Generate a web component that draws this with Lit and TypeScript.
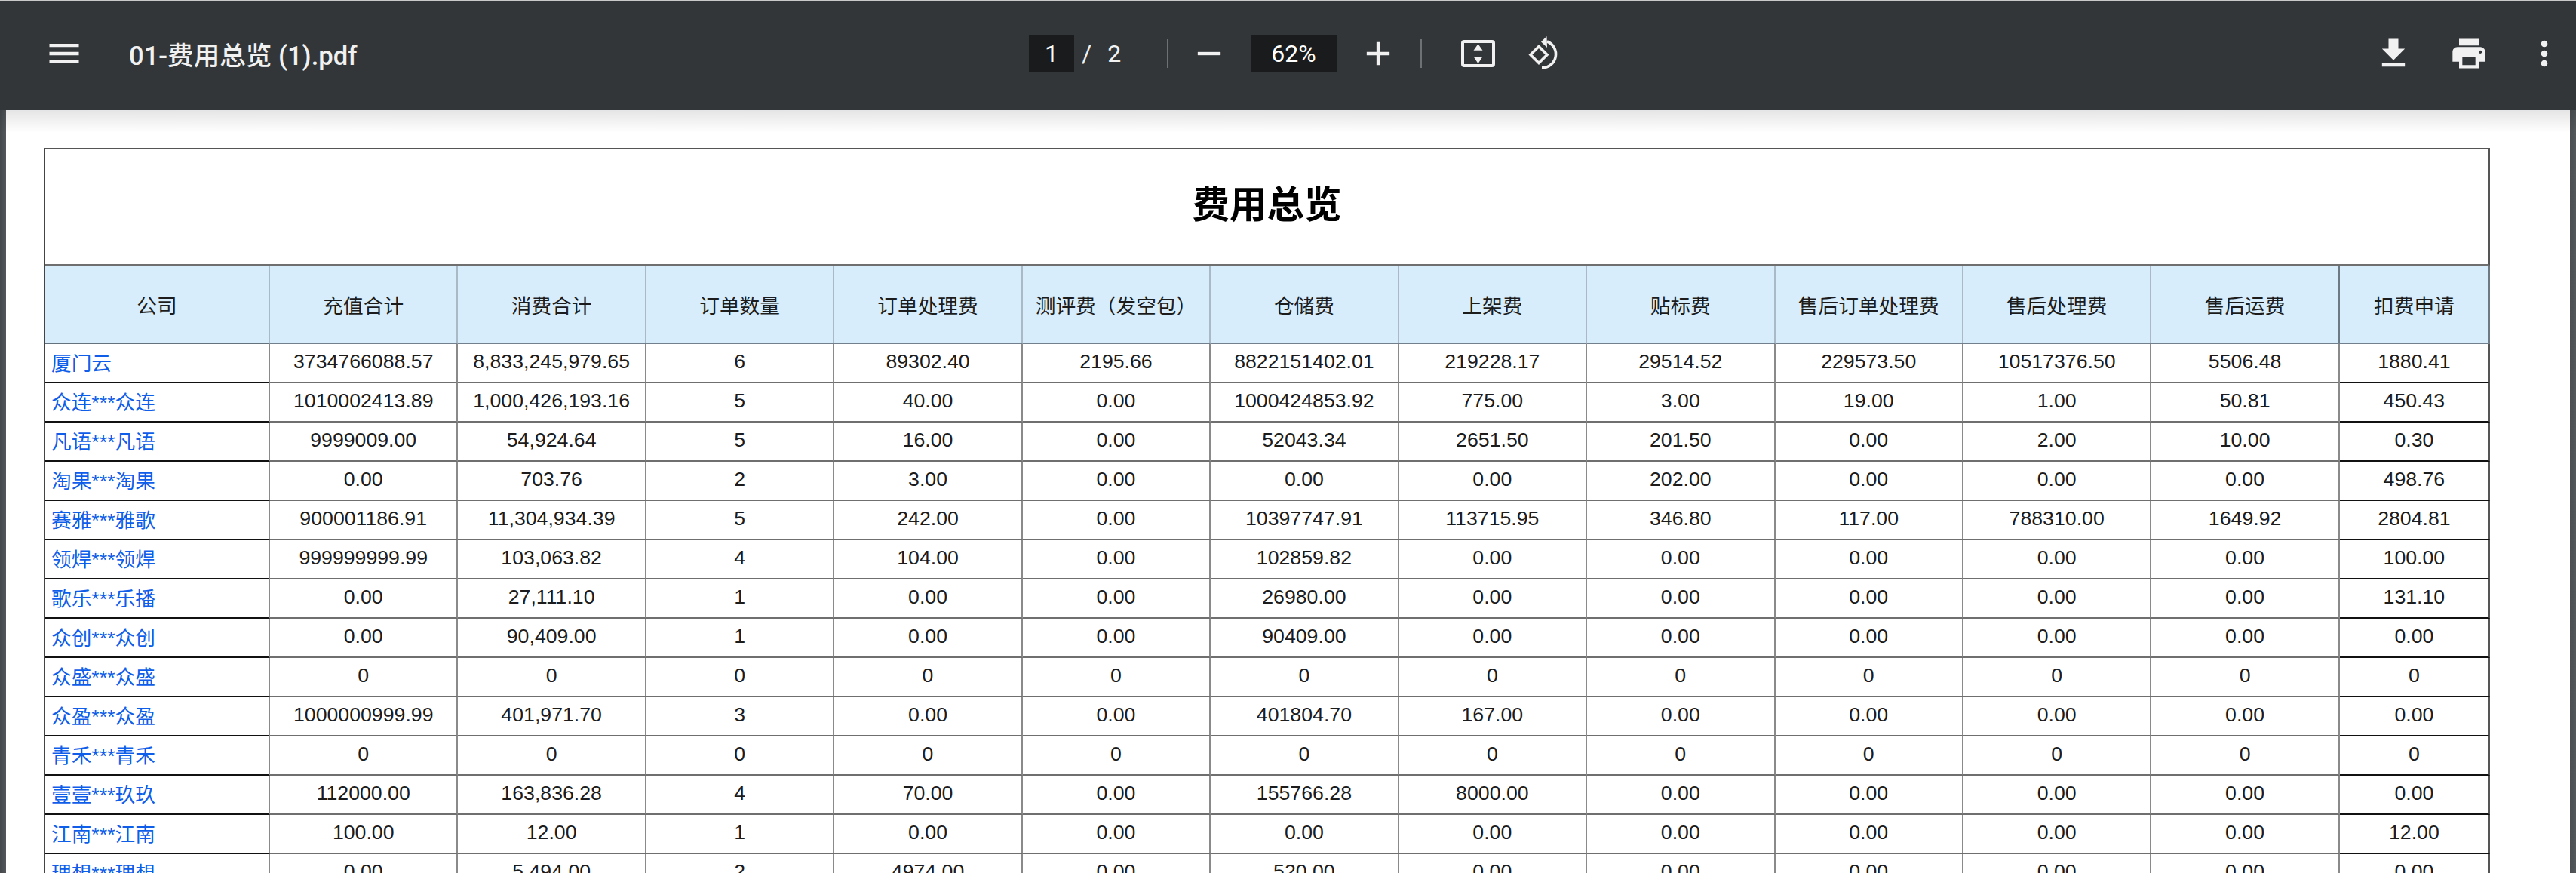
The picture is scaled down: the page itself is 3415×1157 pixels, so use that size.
import { LitElement, html, css } from "lit";
import { customElement } from "lit/decorators.js";

const HEAD = ["公司","充值合计","消费合计","订单数量","订单处理费","测评费（发空包）","仓储费","上架费","贴标费","售后订单处理费","售后处理费","售后运费","扣费申请"];
const ROWS: string[][] = [
  ["厦门云","3734766088.57","8,833,245,979.65","6","89302.40","2195.66","8822151402.01","219228.17","29514.52","229573.50","10517376.50","5506.48","1880.41"],
  ["众连***众连","1010002413.89","1,000,426,193.16","5","40.00","0.00","1000424853.92","775.00","3.00","19.00","1.00","50.81","450.43"],
  ["凡语***凡语","9999009.00","54,924.64","5","16.00","0.00","52043.34","2651.50","201.50","0.00","2.00","10.00","0.30"],
  ["淘果***淘果","0.00","703.76","2","3.00","0.00","0.00","0.00","202.00","0.00","0.00","0.00","498.76"],
  ["赛雅***雅歌","900001186.91","11,304,934.39","5","242.00","0.00","10397747.91","113715.95","346.80","117.00","788310.00","1649.92","2804.81"],
  ["领焊***领焊","999999999.99","103,063.82","4","104.00","0.00","102859.82","0.00","0.00","0.00","0.00","0.00","100.00"],
  ["歌乐***乐播","0.00","27,111.10","1","0.00","0.00","26980.00","0.00","0.00","0.00","0.00","0.00","131.10"],
  ["众创***众创","0.00","90,409.00","1","0.00","0.00","90409.00","0.00","0.00","0.00","0.00","0.00","0.00"],
  ["众盛***众盛","0","0","0","0","0","0","0","0","0","0","0","0"],
  ["众盈***众盈","1000000999.99","401,971.70","3","0.00","0.00","401804.70","167.00","0.00","0.00","0.00","0.00","0.00"],
  ["青禾***青禾","0","0","0","0","0","0","0","0","0","0","0","0"],
  ["壹壹***玖玖","112000.00","163,836.28","4","70.00","0.00","155766.28","8000.00","0.00","0.00","0.00","0.00","0.00"],
  ["江南***江南","100.00","12.00","1","0.00","0.00","0.00","0.00","0.00","0.00","0.00","0.00","12.00"],
  ["理想***理想","0.00","5,494.00","2","4974.00","0.00","520.00","0.00","0.00","0.00","0.00","0.00","0.00"],
];

const icon = (d: string) => html`<svg class="icon" viewBox="0 0 24 24" fill="currentColor"><path d=${d}></path></svg>`;

@customElement("app-root")
export class AppRoot extends LitElement {
  static styles = css`
    :host { display: block; width: 100%; height: 100vh; overflow: hidden; background: #4d5154; font-family: Roboto, "Noto Sans CJK SC", sans-serif; }
    .topline { height: 1px; background: #c9c9c9; }
    .toolbar { position: relative; z-index: 2; box-sizing: border-box; height: 145px; padding-bottom: 5px; background: #323639; color: #f1f1f1; display: flex; align-items: center; }
    .toolbar::after { content: ""; position: absolute; left: 0; right: 0; top: 100%; height: 30px; background: linear-gradient(rgba(0,0,0,.1), rgba(0,0,0,0)); }
    .icon { width: 52px; height: 52px; flex: none; display: block; }
    .left { flex: 0 0 1364px; box-sizing: border-box; padding-left: 59px; display: flex; align-items: center; gap: 60px; }
    .title { font-size: 34.6px; font-weight: 500; white-space: nowrap; }
    .center { display: flex; align-items: center; font-size: 32px; }
    .box { box-sizing: border-box; height: 50px; background: #191b1c; display: flex; align-items: center; justify-content: center; color: #fff; }
    .pagebox { width: 60px; }
    .pager { width: 123px; display: flex; align-items: center; color: #f1f1f1; }
    .slash { margin-left: 10px; }
    .total { margin-left: 21px; }
    .sep { width: 2px; height: 38px; background: #6e7174; flex: none; }
    .minus { margin-left: 28px; }
    .zoombox { width: 114px; margin-left: 29px; }
    .plus { margin-left: 29px; }
    .sep2 { margin-left: 30px; }
    .fit { margin-left: 48px; }
    .rotate { margin-left: 35px; width: 60px; height: 60px; flex: none; display: block; }
    .right { margin-left: auto; padding-right: 16px; display: flex; align-items: center; gap: 48px; }
    .viewer { padding: 0 8px; height: 1011px; background: linear-gradient(90deg, #44484b, #54585b 8px, #4a4e51 3407px, #54585b); }
    .page { box-sizing: border-box; height: 100%; background: #fff; padding: 50px 0 0 50px; overflow: hidden; }
    table { table-layout: fixed; border-spacing: 0; border-collapse: separate; width: 3243px; font-family: "Liberation Sans", "Noto Sans CJK SC", sans-serif; font-size: 26.7px; color: #1c1c1c; border-top: 2px solid #555; border-left: 2px solid #444; }
    .c0 { width: 298px; }
    .cn { width: 249.45px; }
    .cl { width: 199px; }
    th, td { box-sizing: border-box; padding: 0; text-align: center; font-weight: 400; border-right: 2px solid #8a8a8a; border-bottom: 2px solid #6f6f6f; white-space: nowrap; overflow: hidden; }
    td:last-child, th:last-child { border-right-color: #555; }
    th { height: 104px; background: #d7edfb; border-right-color: #a9bac6; border-bottom-color: #71808c; }
    th:first-child { border-bottom-color: #64727d; }
    th:nth-last-child(2) { border-right-color: #6d7a84; }
    th:last-child { border-right-color: #6d7a84; }
    td { height: 52px; padding-bottom: 4px; }
    td:first-child, td:last-child { border-bottom-color: #111; }
    td:first-child { text-align: left; padding-left: 8px; color: #0f5ee9; border-right-color: #8a8a8a; }
    td.titlecell { height: 154px; font-size: 49.5px; font-weight: 700; color: #000; text-align: center; padding: 0 0 14px; border-right-color: #555; border-bottom-color: #6f6f6f; }
  `;

  render() {
    return html`
      <div class="topline"></div>
      <header class="toolbar">
        <div class="left">
          ${icon("M3 18h18v-2H3v2zm0-5h18v-2H3v2zm0-7v2h18V6H3z")}
          <span class="title">01-费用总览 (1).pdf</span>
        </div>
        <div class="center">
          <span class="box pagebox">1</span>
          <span class="pager"><span class="slash">/</span><span class="total">2</span></span>
          <span class="sep"></span>
          <svg class="icon minus" viewBox="0 0 24 24" fill="currentColor"><path d="M5 11h14v2H5z"></path></svg>
          <span class="box zoombox">62%</span>
          <svg class="icon plus" viewBox="0 0 24 24" fill="currentColor"><path d="M19 13h-6v6h-2v-6H5v-2h6V5h2v6h6v2z"></path></svg>
          <span class="sep sep2"></span>
          <svg class="icon fit" viewBox="0 0 52 52" fill="currentColor">
            <rect x="6" y="10" width="41" height="32" rx="2" fill="none" stroke="currentColor" stroke-width="4"></rect>
            <path d="M26.5 13.3l6 8.4h-12zM20.5 30h12l-6 9.3z"></path>
          </svg>
          <svg class="rotate" viewBox="0 0 60 60" fill="none" stroke="currentColor" stroke-width="3.6">
            <path d="M20 20.5L31 31.5 20 42.5 9 31.5z"></path>
            <path d="M31 14A18 18 0 0 1 24 48.8"></path>
            <path d="M23 14.5L30.5 7 31 22z" fill="currentColor" stroke="none"></path>
          </svg>
        </div>
        <div class="right">
          ${icon("M19 9h-4V3H9v6H5l7 7 7-7zM5 18v2h14v-2H5z")}
          ${icon("M19 8H5c-1.66 0-3 1.34-3 3v6h4v4h12v-4h4v-6c0-1.66-1.34-3-3-3zm-3 11H8v-5h8v5zm3-7c-.55 0-1-.45-1-1s.45-1 1-1 1 .45 1 1-.45 1-1 1zm-1-9H6v4h12V3z")}
          ${icon("M12 8c1.1 0 2-.9 2-2s-.9-2-2-2-2 .9-2 2 .9 2 2 2zm0 2c-1.1 0-2 .9-2 2s.9 2 2 2 2-.9 2-2-.9-2-2-2zm0 6c-1.1 0-2 .9-2 2s.9 2 2 2 2-.9 2-2-.9-2-2-2z")}
        </div>
      </header>
      <div class="viewer">
        <div class="page">
          <table>
            <colgroup>
              <col class="c0" />
              ${HEAD.slice(1, -1).map(() => html`<col class="cn" />`)}
              <col class="cl" />
            </colgroup>
            <thead>
              <tr><td class="titlecell" colspan="13">费用总览</td></tr>
              <tr>${HEAD.map((h) => html`<th>${h}</th>`)}</tr>
            </thead>
            <tbody>
              ${ROWS.map((r) => html`<tr>${r.map((c) => html`<td>${c}</td>`)}</tr>`)}
            </tbody>
          </table>
        </div>
      </div>
    `;
  }
}
